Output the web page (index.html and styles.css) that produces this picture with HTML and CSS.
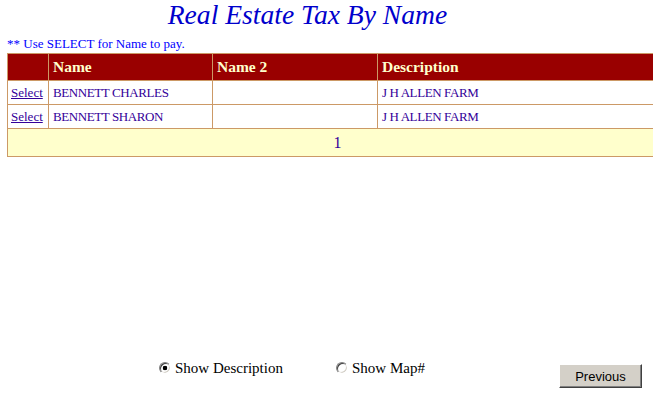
FILE: index.html
```html
<!DOCTYPE html>
<html>
<head>
<meta charset="utf-8">
<title>Real Estate Tax By Name</title>
<link rel="stylesheet" href="styles.css">
</head>
<body>
<div class="page">
  <h1 class="title">Real Estate Tax By Name</h1>
  <p class="note">** Use SELECT for Name to pay.</p>
  <table class="grid">
    <colgroup>
      <col class="c-sel"><col class="c-name"><col class="c-name2"><col class="c-desc">
    </colgroup>
    <thead>
      <tr class="head"><th></th><th>Name</th><th>Name 2</th><th>Description</th></tr>
    </thead>
    <tbody>
      <tr class="row"><td class="sel"><a href="#">Select</a></td><td class="caps">BENNETT CHARLES</td><td></td><td class="caps">J H ALLEN FARM</td></tr>
      <tr class="row"><td class="sel"><a href="#">Select</a></td><td class="caps">BENNETT SHARON</td><td></td><td class="caps">J H ALLEN FARM</td></tr>
      <tr class="pager"><td colspan="4">1</td></tr>
    </tbody>
  </table>
  <div class="bottom">
    <label class="opt opt-desc"><input type="radio" name="show" checked> Show Description</label>
    <label class="opt opt-map"><input type="radio" name="show"> Show Map#</label>
    <button class="btn" type="button">Previous</button>
  </div>
</div>
</body>
</html>
```

FILE: styles.css
```css
html, body {
  margin: 0;
  padding: 0;
  background: #ffffff;
  overflow: hidden;
}
.page {
  width: 653px;
  height: 397px;
  padding-left: 7px;
  box-sizing: border-box;
  font-family: "Liberation Serif", "Times New Roman", serif;
}
.title {
  margin: 0;
  width: 601px;
  text-align: center;
  font-size: 27.6px;
  line-height: 30px;
  font-style: italic;
  font-weight: normal;
  color: #0000cc;
}
.note {
  margin: 6px 0 2px 0;
  font-size: 13px;
  line-height: 15px;
  color: #0000ff;
}
.grid {
  border-collapse: collapse;
  table-layout: fixed;
  width: 660px;
  border: 1px solid #cc9966;
  color: #330099;
}
.c-sel { width: 41px; }
.c-name { width: 164px; }
.c-name2 { width: 165px; }
.c-desc { width: 290px; }
.grid th, .grid td {
  border: 1px solid #cc9966;
  padding: 0 4px;
  text-align: left;
  white-space: nowrap;
}
.head th {
  background: #990000;
  color: #ffffcc;
  font-weight: bold;
  font-size: 15.5px;
  height: 27px;
  box-sizing: border-box;
}
.row td {
  background: #ffffff;
  font-size: 13px;
  height: 24px;
  box-sizing: border-box;
}
.row td.caps {
  letter-spacing: -0.4px;
}
.row td.sel {
  padding-left: 3px;
}
.sel a {
  color: #330099;
  text-decoration: underline;
}
.pager td {
  background: #ffffcc;
  color: #330099;
  text-align: center;
  font-size: 16px;
  height: 28px;
  box-sizing: border-box;
}
.bottom {
  display: flex;
  align-items: flex-start;
  margin-top: 202px;
  padding-left: 152px;
  font-size: 15px;
  color: #000000;
}
.opt {
  display: flex;
  align-items: center;
  line-height: 18px;
}
.opt-desc { width: 177px; }
.opt-map { width: 223px; }
.opt input {
  appearance: none;
  -webkit-appearance: none;
  width: 12px;
  height: 12px;
  margin: 0 4px 0 0;
  border-radius: 50%;
  border: 1px solid;
  border-color: #808080 #ffffff #ffffff #808080;
  box-shadow: inset 1px 1px 0 #404040, inset -1px -1px 0 #d4d0c8;
  background: #ffffff;
  box-sizing: border-box;
}
.opt input:checked {
  background: radial-gradient(circle, #000000 0 2px, #ffffff 2.6px);
}
.btn {
  margin-top: 5px;
  width: 83px;
  height: 24px;
  background: #d4d0c8;
  border: 1px solid;
  border-color: #ffffff #404040 #404040 #ffffff;
  box-shadow: inset -1px -1px 0 #808080;
  font-family: "Liberation Sans", Arial, sans-serif;
  font-size: 13px;
  color: #000000;
  padding: 0;
}
```
